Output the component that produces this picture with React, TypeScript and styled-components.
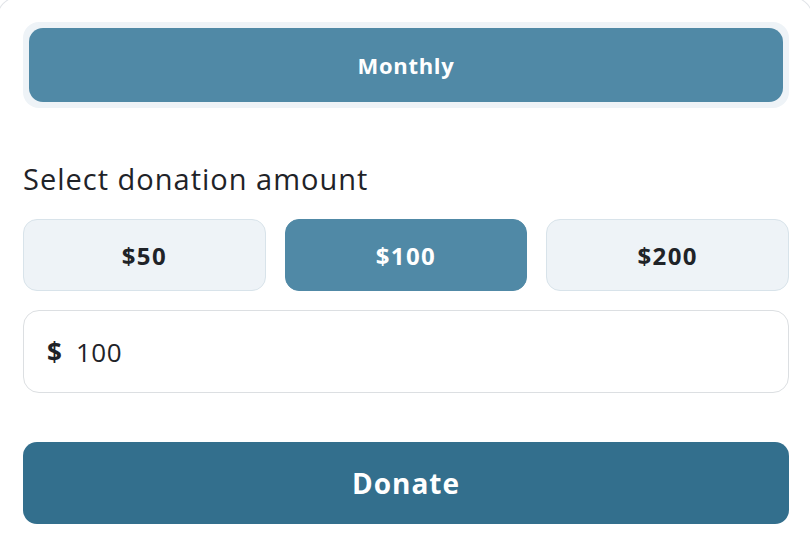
import React, { useState } from "react";
import styled, { createGlobalStyle } from "styled-components";

const GlobalStyle = createGlobalStyle`
  html, body {
    margin: 0;
    padding: 0;
    overflow: hidden;
    background: #ffffff;
    font-family: "Open Sans", "Noto Sans", "Liberation Sans", sans-serif;
    color: #1f2328;
  }
  * { box-sizing: border-box; }
`;

const Card = styled.div`
  margin: -4px 0 0 -4px;
  width: 818px;
  border: 1px solid #e1e4e8;
  border-bottom: none;
  border-radius: 24px 24px 0 0;
  background: #ffffff;
  padding: 25px 24px 16px 26px;
  display: flex;
  flex-direction: column;
`;

const Toggle = styled.div`
  background: #eef3f7;
  border-radius: 16px;
  padding: 6px;
  display: flex;
  gap: 6px;
`;

const ToggleOption = styled.button<{ $active?: boolean }>`
  flex: 1;
  height: 74px;
  border: none;
  border-radius: 14px;
  background: ${(p) => (p.$active ? "#5089a6" : "transparent")};
  color: ${(p) => (p.$active ? "#ffffff" : "#1f2328")};
  font-family: inherit;
  font-size: 22px;
  letter-spacing: 0.7px;
  font-weight: 700;
  cursor: pointer;
`;

const Heading = styled.h2`
  margin: 51px 0 0 0;
  font-size: 29px;
  letter-spacing: 1px;
  line-height: 40px;
  font-weight: 500;
  color: #1f2328;
`;

const AmountGrid = styled.div`
  margin-top: 20px;
  display: grid;
  grid-template-columns: repeat(3, 1fr);
  gap: 19px;
`;

const AmountButton = styled.button<{ $active?: boolean }>`
  height: 72px;
  border-radius: 14px;
  border: 1px solid ${(p) => (p.$active ? "#5089a6" : "#d8e3ea")};
  background: ${(p) => (p.$active ? "#5089a6" : "#eef3f7")};
  color: ${(p) => (p.$active ? "#ffffff" : "#1f2328")};
  font-family: inherit;
  font-size: 24px;
  letter-spacing: 1.4px;
  font-weight: 700;
  cursor: pointer;
`;

const InputBox = styled.label`
  margin-top: 19px;
  height: 83px;
  border: 1px solid #dcdfe2;
  border-radius: 16px;
  background: #ffffff;
  display: flex;
  align-items: center;
  padding: 0 23px;
  gap: 14px;
`;

const Currency = styled.span`
  font-size: 26px;
  font-weight: 700;
  color: #1f2328;
`;

const AmountInput = styled.input`
  flex: 1;
  border: none;
  outline: none;
  background: transparent;
  font-family: inherit;
  font-size: 26px;
  letter-spacing: 0.6px;
  color: #1f2328;
  padding: 0;
`;

const DonateButton = styled.button`
  margin-top: 49px;
  height: 82px;
  border: none;
  border-radius: 14px;
  background: #336f8d;
  color: #ffffff;
  font-family: inherit;
  font-size: 28px;
  letter-spacing: 1px;
  font-weight: 700;
  cursor: pointer;
`;

const amounts = [50, 100, 200];

export default function App() {
  const [amount, setAmount] = useState(100);
  return (
    <>
      <GlobalStyle />
      <Card>
        <Toggle>
          <ToggleOption $active>Monthly</ToggleOption>
        </Toggle>
        <Heading>Select donation amount</Heading>
        <AmountGrid>
          {amounts.map((a) => (
            <AmountButton key={a} $active={a === amount} onClick={() => setAmount(a)}>
              ${a}
            </AmountButton>
          ))}
        </AmountGrid>
        <InputBox>
          <Currency>$</Currency>
          <AmountInput
            value={String(amount)}
            onChange={(e) => setAmount(Number(e.target.value) || 0)}
          />
        </InputBox>
        <DonateButton>Donate</DonateButton>
      </Card>
    </>
  );
}
